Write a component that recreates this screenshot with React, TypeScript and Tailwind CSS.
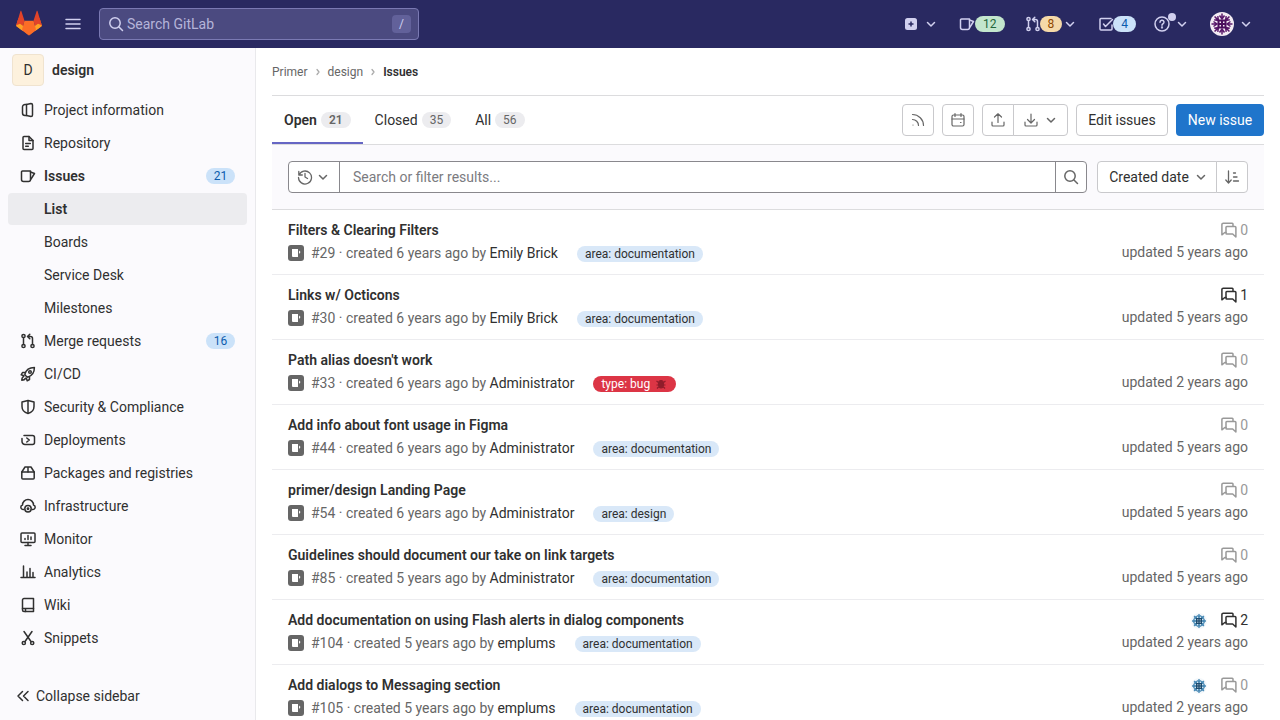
import React from "react";

type IP = { className?: string; size?: number };
const S = ({ className = "", size = 16, sw = 1.5, children }: IP & { sw?: number; children: React.ReactNode }) => (
  <svg width={size} height={size} viewBox="0 0 16 16" fill="none" stroke="currentColor" strokeWidth={sw} strokeLinecap="round" strokeLinejoin="round" className={`shrink-0 ${className}`}>
    {children}
  </svg>
);
const Chevron = ({ className = "" }: IP) => <S className={className}><path d="M4.5 6.5 8 10l3.5-3.5" /></S>;
const Doc = () => <S><path d="M5 2.500h1.500v11H5A2.500 2.500 0 0 1 2.500 11V5A2.500 2.500 0 0 1 5 2.500Z" /><path d="M6.500 2.500 11 1.500c1 0 1.500.5 1.500 1.500v10c0 1-.5 1.500-1.500 1.500l-4.500-1" /></S>;
const Repo = () => <S><path d="M3 2.500A1 1 0 0 1 4 1.500h5L13 5.500V13.500a1 1 0 0 1-1 1H4a1 1 0 0 1-1-1Z" /><path d="M9 1.500v4h4M5.700 8.500h4.600M5.700 11.200h2.600" /></S>;
const IssueI = () => <S><path d="M1.500 4a1 1 0 0 1 1-1h8v8.500a2 2 0 0 1-2 2h-5a2 2 0 0 1-2-2Z" /><path d="M10.500 4 14.500 5.500 11 11" /></S>;
const MR = () => <S><circle cx="3.500" cy="3" r="1.600" /><circle cx="3.500" cy="13" r="1.600" /><circle cx="12.500" cy="13" r="1.600" /><path d="M3.500 4.600v6.800M12.500 11.400V5.500a2 2 0 0 0-2-2H8M9.800 1.200 7.500 3.500l2.300 2.300" /></S>;
const Rocket = () => <S><path d="M6 10 4.800 8.400C6 4 10 1.600 14.400 1.600 14.400 6 12 10 7.600 11.200Z" /><circle cx="10" cy="6" r="1.300" /><path d="M5 6.500H2.500L1.200 8.800l2.800.9M9.500 11v2.500l-2.300 1.300-.9-2.800M3.600 10.600c-1.200.4-1.800 2-1.800 3.600 1.600 0 3.100-.6 3.600-1.800" /></S>;
const Shield = () => <S><path d="M2 3 8 1.500 14 3v4.500c0 3.500-2.500 6-6 7-3.500-1-6-3.500-6-7Z" /><path d="M8 2v12" /></S>;
const Deploy = () => <S><path d="M4 3.500h8.500a2 2 0 0 1 2 2v5a2 2 0 0 1-2 2H5a3 3 0 0 1-3-3V6.500" /><path d="M6.800 6 9.300 8l-2.500 2" /></S>;
const Pkg = () => <S><path d="M1.800 7h12.400v6a1 1 0 0 1-1 1H2.800a1 1 0 0 1-1-1Z" /><path d="M1.800 7 5 2h6l3.200 5M8 2v5" /></S>;
const Infra = () => <S><path d="M3.800 11.500H3A2.300 2.300 0 0 1 2.500 7 5.500 5.500 0 0 1 13.500 7a2.300 2.300 0 0 1-.5 4.500h-.8" /><circle cx="8" cy="10.800" r="3.200" /><circle cx="8" cy="10.800" r=".7" /></S>;
const Monitor = () => <S><rect x="1" y="2" width="14" height="9.500" rx="1" /><path d="M5 14.500h6M8 11.500v3M5 8.500v-1M8 8.500v-4M11 8.500v-2.500" /></S>;
const Analytics = () => <S><path d="M1 13.500h14M3.500 2v11.500M7 8v5.500M10 4.500v9M13 8.500v5" /></S>;
const Wiki = () => <S><path d="M13.500 1.500H4A1.500 1.500 0 0 0 2.500 3v10A1.500 1.500 0 0 0 4 14.500h9.500Z" /><path d="M2.500 11.500h11M5.500 11.500v3" /></S>;
const Snippet = () => <S><circle cx="3.800" cy="13" r="1.600" /><circle cx="12.200" cy="13" r="1.600" /><path d="M4 1.500 11 11.500M12 1.500 5 11.500" /></S>;
const Search = ({ className = "" }: IP) => <S className={className}><circle cx="7" cy="7" r="5.200" /><path d="m11 11 3.500 3.500" /></S>;
const Comments = ({ className = "" }: IP) => (
  <S className={className}><path d="M2.300 1.200h8.900a1 1 0 0 1 .8.800v2M5 10.500H3.800L.9 12.800V2.600a1.400 1.400 0 0 1 1.400-1.400" /><path d="M5.800 4.500h8.200a.9.900 0 0 1 .9.900v9.600l-3.200-3H5.800a.8.800 0 0 1-.8-.8V5.300a.8.800 0 0 1 .8-.8Z" /></S>
);
const spokes = [0, 45, 90, 135, 180, 225, 270, 315];
const Avatar = ({ size = 16, bg, spoke, core, sw }: { size?: number; bg: string; spoke: string; core: string; sw: number }) => (
  <svg width={size} height={size} viewBox="0 0 24 24" className="shrink-0">
    <circle cx="12" cy="12" r="12" fill={bg} />
    {spokes.map((a) => (
      <g key={a} transform={`rotate(${a} 12 12)`}>
        <path d="M12 1.500v5M9.500 3.500 12 7l2.500-3.500" stroke={spoke} strokeWidth={sw} fill="none" />
      </g>
    ))}
    <rect x="7.500" y="7.500" width="9" height="9" fill={core} />
    <g fill={bg}>
      <rect x="9.500" y="9.500" width="1.500" height="1.500" />
      <rect x="13" y="9.500" width="1.500" height="1.500" />
      <rect x="9.500" y="13" width="1.500" height="1.500" />
      <rect x="13" y="13" width="1.500" height="1.500" />
    </g>
  </svg>
);

const Logo = () => (
  <svg width="28" height="28" viewBox="0 0 28 28" className="mb-0.5 shrink-0">
    <path d="M14 26.500 1.800 17.400c-.5-.4-.7-1-.5-1.600L3.500 9 14 26.500Z" fill="#fc6d26" />
    <path d="M14 26.500 26.200 17.400c.5-.4.700-1 .5-1.600L24.500 9 14 26.500Z" fill="#fc6d26" />
    <path d="M1.500 15.500 5.400 2.200c.2-.5.800-.5 1 0L9.500 11.700 7 20.500 1.800 17.400c-.5-.4-.5-1.300-.3-1.900Z" fill="#e24329" />
    <path d="M26.500 15.500 22.600 2.200c-.2-.5-.8-.5-1 0l-3.100 9.500 2.500 8.800 5.200-3.100c.5-.4.500-1.300.3-1.900Z" fill="#e24329" />
    <path d="M1.300 16.300c-.1.500.1 1 .5 1.300L7.500 21.800 9.500 18 5 14.800Z" fill="#fca326" />
    <path d="M26.700 16.300c.1.500-.1 1-.5 1.300L20.500 21.800 18.500 18l4.500-3.200Z" fill="#fca326" />
    <path d="M9.500 11.700h9L21 20.500 14 26.500 7 20.500Z" fill="#fc6d26" />
  </svg>
);

const navTop: [React.ReactNode, string, string?][] = [
  [<Doc />, "Project information"],
  [<Repo />, "Repository"],
];
const navBottom: [React.ReactNode, string, string?][] = [
  [<MR />, "Merge requests", "16"],
  [<Rocket />, "CI/CD"],
  [<Shield />, "Security & Compliance"],
  [<Deploy />, "Deployments"],
  [<Pkg />, "Packages and registries"],
  [<Infra />, "Infrastructure"],
  [<Monitor />, "Monitor"],
  [<Analytics />, "Analytics"],
  [<Wiki />, "Wiki"],
  [<Snippet />, "Snippets"],
];

const NavItem = ({ icon, label, badge, bold }: { icon: React.ReactNode; label: string; badge?: string; bold?: boolean }) => (
  <div className="mx-2 mb-px flex h-8 items-center px-3 text-[#303030]">
    <span className="w-6 shrink-0 text-[#303030]">{icon}</span>
    <span className={`text-sm ${bold ? "font-semibold" : ""}`}>{label}</span>
    {badge && <span className="ml-auto flex h-4 w-[29px] items-center justify-center rounded-full bg-[#cbe2f9] text-xs text-[#0b5cad]">{badge}</span>}
  </div>
);

const SubItem = ({ label, active }: { label: string; active?: boolean }) => (
  <div className={`mx-2 mb-px flex h-8 items-center rounded pl-9 text-sm text-[#303030] ${active ? "bg-[#ececef] font-semibold" : ""}`}>{label}</div>
);

const HeadCount = ({ n, bg, fg }: { n: string; bg: string; fg: string }) => (
  <span className={`flex h-4 items-center justify-center rounded-full px-2 text-xs ${bg} ${fg}`}>{n}</span>
);

const Tab = ({ label, n, active }: { label: string; n: string; active?: boolean }) => (
  <div className={`flex h-12 items-center gap-1 border-b-2 px-3 pt-0.5 text-[#303030] ${active ? "border-[#6666c4]" : "border-transparent"}`}>
    <span className={`text-sm ${active ? "font-semibold" : ""}`}>{label}</span>
    <span className={`flex h-4 items-center rounded-full bg-[#ececef] px-2 text-xs text-[#666] ${active ? "font-semibold" : ""}`}>{n}</span>
  </div>
);

const Btn = ({ children, className = "" }: { children: React.ReactNode; className?: string }) => (
  <div className={`flex h-8 items-center justify-center rounded border border-[#c9c9cc] bg-white text-sm ${className}`}>{children}</div>
);

type Row = { t: string; n: string; ago: string; by: string; label: string; red?: boolean; upd: string; c: number; av?: boolean };
const rows: Row[] = [
  { t: "Filters & Clearing Filters", n: "#29", ago: "6 years", by: "Emily Brick", label: "area: documentation", upd: "5 years", c: 0 },
  { t: "Links w/ Octicons", n: "#30", ago: "6 years", by: "Emily Brick", label: "area: documentation", upd: "5 years", c: 1 },
  { t: "Path alias doesn't work", n: "#33", ago: "6 years", by: "Administrator", label: "type: bug", red: true, upd: "2 years", c: 0 },
  { t: "Add info about font usage in Figma", n: "#44", ago: "6 years", by: "Administrator", label: "area: documentation", upd: "5 years", c: 0 },
  { t: "primer/design Landing Page", n: "#54", ago: "6 years", by: "Administrator", label: "area: design", upd: "5 years", c: 0 },
  { t: "Guidelines should document our take on link targets", n: "#85", ago: "5 years", by: "Administrator", label: "area: documentation", upd: "5 years", c: 0 },
  { t: "Add documentation on using Flash alerts in dialog components", n: "#104", ago: "5 years", by: "emplums", label: "area: documentation", upd: "2 years", c: 2, av: true },
  { t: "Add dialogs to Messaging section", n: "#105", ago: "5 years", by: "emplums", label: "area: documentation", upd: "2 years", c: 0, av: true },
];

const IssueRow = ({ r }: { r: Row }) => (
  <div className="flex h-[65px] shrink-0 justify-between border-b border-[#ececef] px-4 pt-[9px]">
    <div className="min-w-0">
      <div className="h-[22px] text-sm font-semibold leading-[22px] text-[#303030]">{r.t}</div>
      <div className="mt-0.5 flex h-5 items-center text-sm text-[#666]">
        <svg width="16" height="16" viewBox="0 0 16 16" className="mr-[7px] shrink-0">
          <rect width="16" height="16" rx="3" fill="#666" />
          <path d="M4 4h6v8H5a1 1 0 0 1-1-1Z" fill="#fff" />
          <path d="M11 5.500 12.500 7 11 9Z" fill="#fff" />
        </svg>
        <span>{r.n} · created {r.ago} ago by&nbsp;</span>
        <span className="text-[#303030]">{r.by}</span>
        {r.red ? (
          <span className="ml-[19px] mt-0.5 flex h-4 w-[83px] items-center rounded-full bg-[#dc3545] pl-2 text-xs text-white">
            type: bug
            <svg width="12" height="12" viewBox="0 0 12 12" className="ml-[5px]"><path d="M6 2.500c1.500 0 2.500 1.200 2.500 3.500S7.500 10 6 10 3.500 8.300 3.500 6 4.500 2.500 6 2.500ZM1.500 3l2 1.500M10.500 3l-2 1.500M1.500 7h2M10.500 7h-2M2 10.500 3.500 9M10 10.500 8.500 9" stroke="#8f1d2b" strokeWidth="1.200" fill="#8f1d2b" /></svg>
          </span>
        ) : (
          <span className="ml-[19px] mt-0.5 flex h-4 items-center rounded-full bg-[#d9e8f8] px-2 text-xs text-[#303030]">{r.label}</span>
        )}
      </div>
    </div>
    <div className="flex shrink-0 flex-col items-end">
      <div className={`flex h-[22px] items-center text-sm ${r.c > 0 ? "text-[#303030]" : "text-[#999]"}`}>
        {r.av && <span className="mr-[14px] mt-0.5"><Avatar size={16} bg="#f4f8fb" spoke="#4a8ab5" core="#1c4a6e" sw={2} /></span>}
        <Comments className="mr-[3px]" />
        <span>{r.c}</span>
      </div>
      <div className="mt-px text-sm leading-5 text-[#666]">updated {r.upd} ago</div>
    </div>
  </div>
);

export default function App() {
  return (
    <div className="flex h-[720px] w-[1280px] flex-col overflow-hidden bg-white font-['Roboto',sans-serif]">
      <header className="flex h-12 shrink-0 items-center bg-[#292961] text-[#d1d0ef]">
        <div className="ml-[15px]"><Logo /></div>
        <svg width="16" height="16" viewBox="0 0 16 16" className="ml-[22px] shrink-0" stroke="#d1d0ef" strokeWidth="1.500" strokeLinecap="round"><path d="M1 3.500h14M1 8h14M1 12.500h14" /></svg>
        <div className="ml-[18px] flex h-8 w-80 items-center rounded border border-[#7a79b3] bg-[#4b4a80] pl-2 pr-[7px]">
          <Search className="text-[#d1d0ef]" />
          <span className="ml-[3px] text-sm text-[#b5b4d9]">Search GitLab</span>
          <span className="ml-auto flex h-[18px] w-[19px] items-center justify-center rounded-sm bg-[#62619a] text-xs text-[#d1d0ef]">/</span>
        </div>
        <div className="ml-auto flex items-center pr-[26px]">
          <svg width="16" height="16" viewBox="0 0 16 16" className="shrink-0"><rect x="2" y="2" width="12" height="12" rx="2.500" fill="#d1d0ef" /><path d="M8 5.500v5M5.500 8h5" stroke="#292961" strokeWidth="1.500" /></svg>
          <Chevron className="ml-1" />
          <span className="ml-5"><IssueI /></span>
          <HeadCount n="12" bg="bg-[#c3e6cd]" fg="text-[#24663b]" />
          <span className="ml-5"><MR /></span>
          <span className="-ml-px"><HeadCount n="8" bg="bg-[#f5d9a8]" fg="text-[#8f4700]" /></span>
          <Chevron />
          <span className="ml-5"><svg width="16" height="16" viewBox="0 0 16 16" fill="none" stroke="currentColor" strokeWidth="1.500" strokeLinecap="round" strokeLinejoin="round"><path d="M14 9v4a1 1 0 0 1-1 1H3a1 1 0 0 1-1-1V3.500a1 1 0 0 1 1-1h10M5.500 8l2 2.500 7-7" /></svg></span>
          <span className="-ml-px"><HeadCount n="4" bg="bg-[#cbe2f9]" fg="text-[#0b5cad]" /></span>
          <span className="relative ml-[18px]">
            <svg width="16" height="16" viewBox="0 0 16 16" fill="none" stroke="currentColor" strokeWidth="1.500" strokeLinecap="round"><circle cx="8" cy="8" r="7" /><path d="M6 6.300A2 2 0 1 1 8.800 8c-.6.300-.8.700-.8 1.200" /><circle cx="8" cy="11.500" r=".4" /></svg>
            <span className="absolute -right-1.5 -top-[3px] size-2 rounded-full bg-[#d1d0ef]" />
          </span>
          <Chevron className="ml-1" />
          <span className="ml-5"><Avatar size={24} bg="#f3ecf3" spoke="#5a1a6b" core="#4b0f5c" sw={1.5} /></span>
          <Chevron className="ml-1" />
        </div>
      </header>
      <div className="flex min-h-0 flex-1">
        <aside className="flex w-[256px] shrink-0 flex-col border-r border-[#e9e9ec] bg-[#fbfafd]">
          <div className="flex h-[46px] items-center pb-0.5 pl-3 text-sm font-semibold text-[#303030]">
            <span className="mr-2 flex size-8 items-center justify-center rounded border border-[#f0e3cf] bg-[#fdf1dd] font-normal text-[#303030]">D</span>
            design
          </div>
          <div className="flex-1">
            {navTop.map(([i, l]) => <NavItem key={l} icon={i} label={l} />)}
            <NavItem icon={<IssueI />} label="Issues" badge="21" bold />
            <SubItem label="List" active />
            <SubItem label="Boards" />
            <SubItem label="Service Desk" />
            <SubItem label="Milestones" />
            {navBottom.map(([i, l, b]) => <NavItem key={l} icon={i} label={l} badge={b} />)}
          </div>
          <div className="flex h-12 items-center pl-4 text-sm text-[#303030]">
            <S className="mr-1"><path d="M6.500 3.500 2 8l4.500 4.500M12 3.500 7.500 8l4.500 4.500" /></S>
            Collapse sidebar
          </div>
        </aside>
        <main className="flex min-w-0 flex-1 flex-col px-4">
          <div className="flex h-12 shrink-0 items-center border-b border-[#dcdcde] text-xs text-[#666]">
            <span>Primer</span>
            <S size={8} className="mx-[6px] text-[#aaa]"><path d="m6 3 4 5-4 5" strokeWidth="2.500" /></S>
            <span>design</span>
            <S size={8} className="mx-[6px] text-[#aaa]"><path d="m6 3 4 5-4 5" strokeWidth="2.500" /></S>
            <span className="font-semibold text-[#303030]">Issues</span>
          </div>
          <div className="flex h-[49px] shrink-0 items-center justify-between border-b border-[#dcdcde]">
            <div className="flex h-12 self-start">
              <Tab label="Open" n="21" active />
              <Tab label="Closed" n="35" />
              <Tab label="All" n="56" />
            </div>
            <div className="flex items-center gap-2 self-start pt-2 text-[#666]">
              <Btn className="w-8"><S sw={1.2}><path d="M2.500 2.500a11 11 0 0 1 11 11M2.500 7.500a6 6 0 0 1 6 6M3 13h.01" /></S></Btn>
              <Btn className="w-8"><S sw={1.2}><rect x="2" y="3" width="12" height="11" rx="1.500" /><path d="M5 1.500v3M11 1.500v3M2 7h12M10.500 10.500h.5" /></S></Btn>
              <div className="flex">
                <Btn className="w-8 rounded-r-none"><S sw={1.2}><path d="M2 10v3a1 1 0 0 0 1 1h10a1 1 0 0 0 1-1v-3M8 10.500V2M4.500 5 8 1.800 11.500 5" /></S></Btn>
                <Btn className="-ml-px w-[55px] rounded-l-none"><S sw={1.2}><path d="M2 10v3a1 1 0 0 0 1 1h10a1 1 0 0 0 1-1v-3M8 2v8.500M4.500 7.500 8 11l3.500-3.500" /></S><Chevron className="ml-1" /></Btn>
              </div>
              <Btn className="w-[92px] text-[#303030]">Edit issues</Btn>
              <div className="flex h-8 w-[88px] items-center justify-center rounded bg-[#1f75cb] text-sm text-white">New issue</div>
            </div>
          </div>
          <div className="flex h-[65px] shrink-0 items-center border-b border-[#dcdcde] bg-[#fbfafd] px-4">
            <div className="flex h-8 flex-1 items-stretch rounded border border-[#89888d] bg-white">
              <div className="flex w-[51px] items-center justify-center border-r border-[#89888d] text-[#666]">
                <S sw={1.3}><path d="M1.800 2.500v3.500h3.500M2 6a6.500 6.500 0 1 1-.5 2.500M8 4.500V8l2.500 1.500" /></S>
                <Chevron className="ml-0.5" />
              </div>
              <div className="flex flex-1 items-center pl-[13px] text-sm text-[#7b7b80]">Search or filter results...</div>
              <div className="flex w-[31px] items-center justify-center border-l border-[#89888d] text-[#666]"><Search /></div>
            </div>
            <div className="ml-2.5 flex h-8">
              <Btn className="w-[120px] rounded-r-none pl-1 text-[#303030]">Created date<Chevron className="ml-1 text-[#666]" /></Btn>
              <Btn className="-ml-px w-8 rounded-l-none text-[#666]"><S sw={1.3}><path d="M4.500 2v11.500M1.800 11l2.700 3 2.700-3M9.500 4h2M9.500 8h3.500M9.500 12h5" /></S></Btn>
            </div>
          </div>
          {rows.map((r) => <IssueRow key={r.n} r={r} />)}
        </main>
      </div>
    </div>
  );
}
